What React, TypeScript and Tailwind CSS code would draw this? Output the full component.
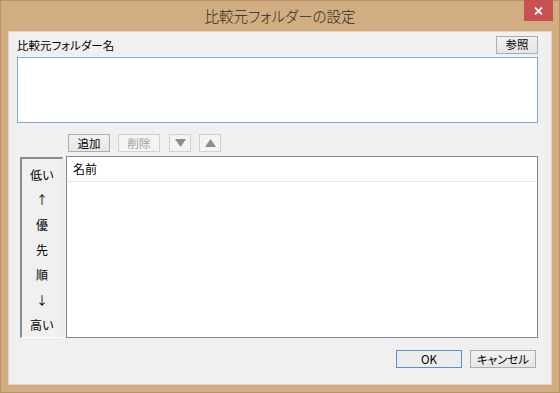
const font = {
  fontFamily: '"Noto Sans CJK JP", "Noto Sans", sans-serif',
};

function Btn({
  label,
  width,
  disabled,
  primary,
  children,
}: {
  label?: string;
  width: string;
  disabled?: boolean;
  primary?: boolean;
  children?: React.ReactNode;
}) {
  const tone = disabled
    ? "border-[#d2d2d2] bg-[#f4f4f4] text-[#a0a0a0]"
    : primary
      ? "border-[#4f95dc] bg-[#ececec] text-black"
      : "border-[#adadad] bg-gradient-to-b from-[#f2f2f2] to-[#e6e6e6] text-black";
  return (
    <div
      className={`${width} flex h-[18px] items-center justify-center border text-[11.5px] leading-none [font-feature-settings:'palt'] ${tone}`}
    >
      {label}
      {children}
    </div>
  );
}

function Tri({ up }: { up?: boolean }) {
  return (
    <svg width="11" height="8" viewBox="0 0 11 8">
      <path
        d={up ? "M5.5 0 L11 8 L0 8 Z" : "M0 0 L11 0 L5.5 8 Z"}
        fill="#8d8d8d"
      />
    </svg>
  );
}

export default function App() {
  const order = ["低い", "↑", "優", "先", "順", "↓", "高い"];
  return (
    <div
      style={font}
      className="flex h-[393px] w-[560px] flex-col border border-[#b89368] bg-[#d3ad82]"
    >
      <div className="relative flex h-[30px] shrink-0 items-center justify-center">
        <span className="text-[14.5px] font-light text-[#2a2a2a] [font-feature-settings:'palt']">
          比較元フォルダーの設定
        </span>
        <div className="absolute right-[6px] top-[-1px] flex h-[21px] w-[29px] items-center justify-center bg-[#c75050]">
          <svg width="9" height="8" viewBox="0 0 9 8">
            <path d="M1 0.5 L8 7.5 M8 0.5 L1 7.5" stroke="#fff" strokeWidth="1.8" />
          </svg>
        </div>
      </div>

      <div className="mx-[7px] mb-[7px] flex flex-1 flex-col border border-[#e2d2c0] bg-[#f0f0f0] pl-[8px] pr-[13px]">
        <div className="mt-[4px] flex items-center justify-between">
          <span className="pt-[1px] text-[11.5px] text-black [font-feature-settings:'palt']">
            比較元フォルダー名
          </span>
          <Btn label="参照" width="w-[42px]" />
        </div>

        <div className="mt-[3px] h-[66px] border border-[#7eaad4] bg-white" />

        <div className="mt-[11px] flex gap-[8px] pl-[51px]">
          <Btn label="追加" width="w-[42px]" />
          <Btn label="削除" width="w-[42px]" disabled />
          <div className="ml-px">
            <Btn width="w-[22px]" disabled>
              <Tri />
            </Btn>
          </div>
          <Btn width="w-[22px]" disabled>
            <Tri up />
          </Btn>
        </div>

        <div className="mt-[4px] flex h-[182px] gap-[3px]">
          <div className="ml-[3px] mt-px flex h-[181px] w-[43px] flex-col items-center border-b border-l-2 border-r border-t-2 border-b-white border-l-[#8a8a8a] border-r-[#e8e8e8] border-t-[#8a8a8a] pt-[3px] text-[12px] text-black">
            {order.map((t, i) => (
              <div key={i} className="flex h-[25px] items-center leading-none">
                {t}
              </div>
            ))}
          </div>
          <div className="flex-1 border border-[#828790] bg-white">
            <div className="mr-[2px] flex h-[25px] items-center border-b border-[#e5e5e5] pl-[6px] text-[12px] text-black">
              名前
            </div>
          </div>
        </div>

        <div className="mt-[12px] flex justify-end gap-[8px] pr-[2px]">
          <Btn label="OK" width="w-[66px]" primary />
          <Btn label="キャンセル" width="w-[66px]" />
        </div>
      </div>
    </div>
  );
}
